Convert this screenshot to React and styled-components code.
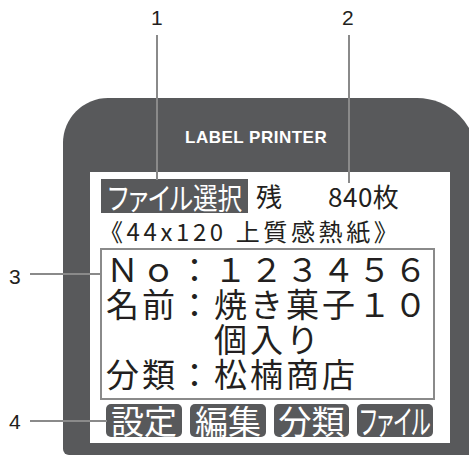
import styled, { createGlobalStyle } from 'styled-components';

const GlobalStyle = createGlobalStyle`
  html, body {
    margin: 0;
    padding: 0;
    background: #ffffff;
  }
  body {
    font-family: "Noto Sans CJK JP", "Noto Sans", sans-serif;
    color: #231f20;
  }
`;

const Stage = styled.div`
  position: relative;
  width: 469px;
  height: 457px;
  overflow: hidden;
  background: #ffffff;
`;

const Device = styled.div`
  display: flex;
  flex-direction: column;
  width: 414px;
  height: 357px;
  margin: 98px 0 0 63px;
  background: #58595b;
  border-radius: 45px 60px 6px 6px;
`;

const Header = styled.div`
  display: flex;
  align-items: center;
  height: 74px;
  padding-left: 122px;
  box-sizing: border-box;
`;

const Brand = styled.span`
  font-family: "Liberation Sans", Arial, sans-serif;
  font-weight: 700;
  font-size: 17px;
  letter-spacing: 0.5px;
  color: #ffffff;
  margin-top: 6px;
`;

const Screen = styled.div`
  display: flex;
  flex-direction: column;
  width: 360px;
  height: 271px;
  margin-left: 27px;
  background: #ffffff;
  box-sizing: border-box;
  padding: 7px 0 0 10px;
`;

const StatusRow = styled.div`
  display: flex;
  align-items: center;
  height: 34px;
  padding-left: 1px;
`;

const Selected = styled.span`
  display: inline-flex;
  align-items: center;
  justify-content: center;
  width: 147px;
  height: 34px;
  background: #58595b;
  color: #ffffff;
  font-size: 30px;
  line-height: 1;
  white-space: nowrap;
  overflow: visible;
`;

const Squeeze = styled.span`
  display: inline-block;
  white-space: nowrap;
  font-feature-settings: "palt";
  transform: scaleX(${(p) => p.$k || 1});
`;

const StatusText = styled.span`
  font-size: 26px;
  line-height: 1;
  margin-left: ${(p) => p.$gap}px;
  letter-spacing: ${(p) => p.$spacing || 0}px;
`;

const MediaRow = styled.div`
  height: 35px;
  display: flex;
  align-items: center;
  font-size: 24px;
  letter-spacing: 3.6px;
  line-height: 1;
  margin-left: -1px;
`;

const Frame = styled.div`
  width: 335px;
  height: 152px;
  border: 2px solid #8a8a8a;
  box-sizing: border-box;
  padding: 1px 0 0 4px;
`;

const Line = styled.div`
  font-size: 33px;
  letter-spacing: 3px;
  line-height: 35px;
  height: 35px;
  white-space: pre;
`;

const Keys = styled.div`
  display: flex;
  gap: 8px;
  margin: 4px 0 0 6px;
`;

const Key = styled.div`
  display: flex;
  align-items: center;
  justify-content: center;
  width: ${(p) => p.$w}px;
  height: 33px;
  background: #58595b;
  border-radius: 5px;
  color: #ffffff;
  font-size: 33px;
  line-height: 1;
  overflow: visible;
`;

const Callout = styled.span`
  position: absolute;
  left: ${(p) => p.$x}px;
  top: ${(p) => p.$y}px;
  font-family: "Liberation Sans", Arial, sans-serif;
  font-size: 21px;
  font-weight: 500;
  line-height: 1;
  color: #231f20;
`;

const Leader = styled.div`
  position: absolute;
  left: ${(p) => p.$x}px;
  top: ${(p) => p.$y}px;
  width: ${(p) => p.$w}px;
  height: ${(p) => p.$h}px;
  background: #8a8a8a;
`;

const keys = [
  { label: '設定', w: 76 },
  { label: '編集', w: 76 },
  { label: '分類', w: 75 },
  { label: 'ファイル', w: 76, squeeze: 0.62 },
];

function App() {
  return (
    <Stage>
      <GlobalStyle />
      <Device>
        <Header>
          <Brand>LABEL PRINTER</Brand>
        </Header>
        <Screen>
          <StatusRow>
            <Selected>
              <Squeeze $k={0.82}>ファイル選択</Squeeze>
            </Selected>
            <StatusText $gap={8}>残</StatusText>
            <StatusText $gap={46} $spacing={0.5}>840枚</StatusText>
          </StatusRow>
          <MediaRow>《44x120 上質感熱紙》</MediaRow>
          <Frame>
            <Line>Ｎｏ：１２３４５６</Line>
            <Line>名前：焼き菓子１０</Line>
            <Line>{'　　　個入り'}</Line>
            <Line>分類：松楠商店</Line>
          </Frame>
          <Keys>
            {keys.map((k) => (
              <Key key={k.label} $w={k.w}>
                <Squeeze $k={k.squeeze}>{k.label}</Squeeze>
              </Key>
            ))}
          </Keys>
        </Screen>
      </Device>

      {/* 番号付きの引き出し線 */}
      <Callout $x={151} $y={7}>1</Callout>
      <Leader $x={156} $y={35} $w={2} $h={145} />
      <Callout $x={342} $y={7}>2</Callout>
      <Leader $x={348} $y={35} $w={2} $h={148} />
      <Callout $x={9} $y={266}>3</Callout>
      <Leader $x={30} $y={273} $w={70} $h={2} />
      <Callout $x={9} $y={411}>4</Callout>
      <Leader $x={30} $y={420} $w={77} $h={2} />
    </Stage>
  );
}

export default App;
